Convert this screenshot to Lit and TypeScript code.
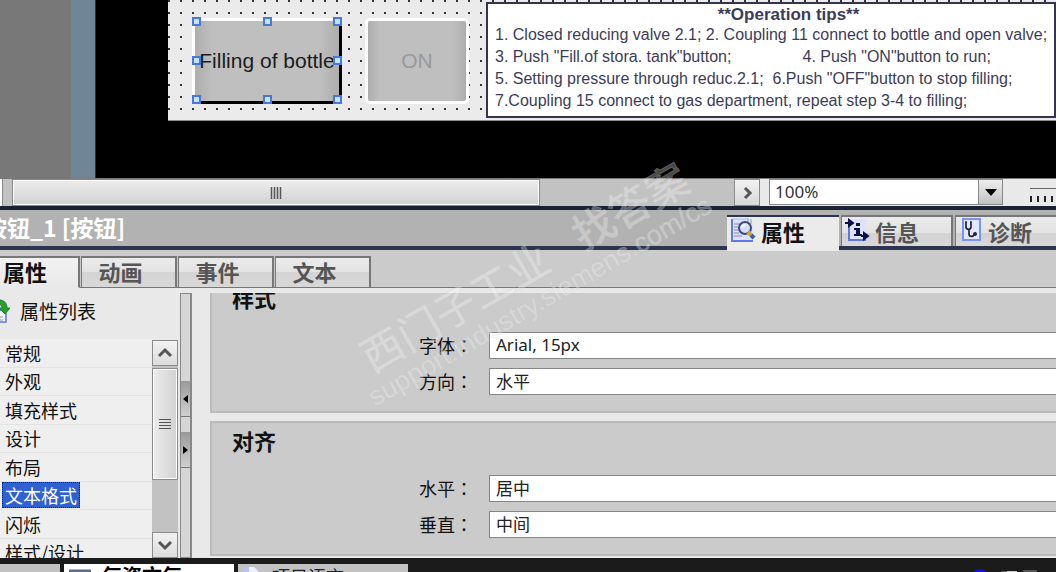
import { LitElement, html, css } from "lit";
import { customElement, state } from "lit/decorators.js";
import { classMap } from "lit/directives/class-map.js";

const categories = ["常规", "外观", "填充样式", "设计", "布局", "文本格式", "闪烁", "样式/设计"];
const subTabs = ["属性", "动画", "事件", "文本"];

const listIcon = html`<svg class="list-icon" width="10" height="24" viewBox="0 0 10 24" aria-hidden="true">
  <rect x="-8" y="11" width="14" height="12" fill="#f4f6ff" stroke="#5b76d8" stroke-width="1.5" />
  <path d="M-1 18h4M-1 21h4" stroke="#8a93b8" />
  <path d="M-4 1C3 0 7 3 7 9h3l-5 6-6-6h3C2 6 0 5-4 5z" fill="#27a02c" stroke="#17701c" stroke-width=".8" />
</svg>`;

const propertiesIcon = html`<svg width="25" height="25" viewBox="0 0 25 25" aria-hidden="true">
  <path d="M1 1h17l4 4v18H1z" fill="#dbe3ff" />
  <path d="M1 1v22h21" fill="none" stroke="#5f78e8" stroke-width="2" />
  <path d="M1 1h16" stroke="#a9b8f4" />
  <path d="M3 6h6M3 9h4M3 12h4M3 15h5M3 18h8" stroke="#8189a0" />
  <path d="M17 0v6M20 1v5" stroke="#9aa0b4" />
  <circle cx="14" cy="10" r="6" fill="#d5ddfa" stroke="#3f4876" stroke-width="2" />
  <path d="M11 10a3 3 0 0 1 4-3" fill="none" stroke="#fff" stroke-width="1.5" />
  <path d="M17 14l3 3" stroke="#d8a23a" stroke-width="4" />
  <path d="M20 17l3 3" stroke="#3d5ea8" stroke-width="4" />
</svg>`;

const infoIcon = html`<svg width="25" height="25" viewBox="0 0 25 25" aria-hidden="true">
  <path d="M4 1h17v21H4z" fill="#dbe3ff" />
  <path d="M4 1v21h17" fill="none" stroke="#5f78e8" stroke-width="2" />
  <path d="M0 5h6M4 2l4 3-4 3z" fill="#0b0f4a" stroke="#0b0f4a" stroke-width="2" />
  <path d="M11 5h4v3h-4zM9 10h6v6h2v2H9v-2h2v-4H9z" fill="#0b0f4a" />
  <path d="M16 18h6M19 15l4 3-4 3z" fill="#0b0f4a" stroke="#0b0f4a" stroke-width="2" />
</svg>`;

const diagnosticsIcon = html`<svg width="19" height="25" viewBox="0 0 19 25" aria-hidden="true">
  <path d="M1 1h16v21H1z" fill="#e0e7ff" />
  <path d="M1 1v21h17V1z" fill="none" stroke="#7d92ee" stroke-width="2" />
  <path d="M5 4H4v5c0 3 5 3 5 0V4H8M7 11v5c0 3 4 3 5 1" fill="none" stroke="#22252e" stroke-width="1.7" />
  <circle cx="13" cy="16" r="2" fill="#22252e" />
</svg>`;

const chevron = (d: string) =>
  html`<svg width="16" height="16" viewBox="0 0 16 16" aria-hidden="true"><path d=${d} fill="none" stroke="#555" stroke-width="3" /></svg>`;

const handlePoints = [
  [0, 0], [50, 0], [100, 0],
  [0, 50], [100, 50],
  [0, 100], [50, 100], [100, 100],
];

@customElement("hmi-canvas")
export class HmiCanvas extends LitElement {
  static styles = css`
    :host {
      display: flex;
      height: 178px;
      background: #000;
      font-family: "Liberation Sans", Arial, sans-serif;
    }
    .dock { flex: none; width: 71px; background: #787878; }
    .edge { flex: none; width: 24px; background: #6f8699; border-right: 1px solid #26323c; }
    .screen {
      flex: 1;
      align-self: flex-start;
      display: flex;
      align-items: flex-start;
      box-sizing: border-box;
      height: 121px;
      margin-left: 72px;
      padding: 2px 0 0 24px;
      background: radial-gradient(circle at 1px 1px, #333 0, #333 1px, transparent 1px) 0 0 / 12px 12px, #ebebeb;
      border-bottom: 1px solid #8d8d8d;
    }
    .key {
      flex: none;
      box-sizing: border-box;
      height: 86px;
      margin: 16px 0 0;
      padding: 0;
      font: 21px "Liberation Sans", Arial, sans-serif;
      white-space: nowrap;
      background: linear-gradient(90deg, #adadad, #bfbfbf 12%, #bfbfbf 86%, #adadad);
    }
    .fill {
      position: relative;
      width: 150px;
      color: #1c1c1c;
      border: 3px solid;
      border-color: #fff #000 #000 #fff;
    }
    .on {
      width: 104px;
      margin-left: 23px;
      color: #999;
      border: 3px solid #fff;
      border-radius: 5px;
    }
    .handles { position: absolute; inset: 1px 1px 1px 2px; }
    .handle {
      position: absolute;
      box-sizing: border-box;
      width: 9px;
      height: 9px;
      margin: -5px;
      background: #bfe4fb;
      border: 2px solid #4878dc;
    }
    .tips {
      flex: 1;
      box-sizing: border-box;
      height: 116px;
      margin-left: 17px;
      padding: 2px 0 0 7px;
      overflow: hidden;
      background: #fff;
      border: 2px solid #34344e;
      color: #3c3c58;
      font-size: 16px;
      line-height: 22px;
      white-space: pre;
    }
    .tips h2 { margin: 0; padding-left: 28px; font-size: 17px; line-height: 18px; text-align: center; }
    .tips p { margin: 0; }
  `;
  render() {
    return html`
      <div class="dock"></div>
      <div class="edge"></div>
      <div class="screen">
        <button class="key fill">Filling of bottle<span class="handles">${handlePoints.map(
          ([x, y]) => html`<span class="handle" style="left:${x}%;top:${y}%"></span>`
        )}</span></button>
        <button class="key on">ON</button>
        <section class="tips"><h2>**Operation tips**</h2><p>1. Closed reducing valve 2.1; 2. Coupling 11 connect to bottle and open valve;</p><p>3. Push "Fill.of stora. tank"button;                4. Push "ON"button to run;</p><p>5. Setting pressure through reduc.2.1;  6.Push "OFF"button to stop filling;</p><p>7.Coupling 15 connect to gas department, repeat step 3-4 to filling;</p></section>
      </div>`;
  }
}

@customElement("zoom-bar")
export class ZoomBar extends LitElement {
  static styles = css`
    :host {
      display: flex;
      box-sizing: border-box;
      height: 28px;
      background: #e9e9e9;
      border-top: 1px solid #777;
    }
    .track { flex: 1; display: flex; background: #c2c2c2; }
    .stub { width: 2px; background: #fff; border-right: 1px solid #888; }
    .thumb {
      box-sizing: border-box;
      width: 528px;
      margin-left: 9px;
      display: flex;
      align-items: center;
      justify-content: center;
      border: 1px solid #888;
      box-shadow: inset 0 0 0 1px #fff;
      background: linear-gradient(#ececec, #d2d2d2);
    }
    .step {
      width: 26px;
      padding: 0;
      display: grid;
      place-items: center;
      border: 1px solid #8b8b8b;
      background: linear-gradient(#f2f2f2, #d8d8d8);
    }
    .combo { display: grid; width: 234px; margin: 0 0 2px 9px; }
    .combo select {
      grid-area: 1 / 1;
      appearance: none;
      padding: 0 5px 1px;
      border: 1px solid #888;
      border-radius: 0;
      background: #fff;
      color: #333;
      font: 17px "Noto Sans", sans-serif;
    }
    .arrow {
      grid-area: 1 / 1;
      justify-self: end;
      box-sizing: border-box;
      width: 25px;
      display: grid;
      place-items: center;
      border: 1px solid #888;
      background: linear-gradient(#eee, #c2c2c2);
      pointer-events: none;
    }
    .scale { display: flex; flex-direction: column; gap: 7px; width: 26px; margin: 9px 0 0 27px; overflow: hidden; }
    .scale input { appearance: none; flex: none; width: 140px; height: 1px; margin: 0; background: #666; }
    .scale input::-webkit-slider-thumb { appearance: none; width: 1px; height: 1px; }
    .ticks { height: 6px; background: repeating-linear-gradient(90deg, #222 0 2px, transparent 2px 7px); }
  `;
  render() {
    return html`
      <div class="track">
        <div class="stub"></div>
        <div class="thumb"><svg width="12" height="12" viewBox="0 0 12 12" aria-hidden="true"><path d="M1.500 0v12M4.500 0v12M7.500 0v12M10.500 0v12" stroke="#555" stroke-width="1.5" /></svg></div>
      </div>
      <button class="step" aria-label="Scroll right">${chevron("M6 3l5 5-5 5")}</button>
      <div class="combo">
        <select aria-label="Zoom"><option>100%</option></select>
        <span class="arrow"><svg width="12" height="7" viewBox="0 0 12 7" aria-hidden="true"><path d="M0 0h12L6 7z" /></svg></span>
      </div>
      <div class="scale"><input type="range" aria-label="Zoom factor" /><div class="ticks"></div></div>`;
  }
}

@customElement("inspector-header")
export class InspectorHeader extends LitElement {
  static styles = css`
    :host {
      display: flex;
      align-items: flex-start;
      justify-content: space-between;
      box-sizing: border-box;
      height: 45px;
      border-top: 4px solid #1b2234;
      background: linear-gradient(#b2b2b2, #b2b2b2 36px, #2c3450 36px, #2c3450 40px, #cbcbcb 40px);
      overflow: hidden;
    }
    h1 {
      margin: 0 0 0 -16px;
      color: #fff;
      font: bold 23px/34px "Noto Sans CJK SC", sans-serif;
      white-space: nowrap;
    }
    .tabs { display: flex; gap: 2px; margin-top: 5px; }
    .tab {
      display: flex;
      align-items: center;
      gap: 5px;
      box-sizing: border-box;
      width: 112px;
      height: 31px;
      padding: 0 0 2px 3px;
      border: 1px solid #777;
      border-width: 2px 2px 0 1px;
      background: linear-gradient(#ebebeb, #e2e2e2 55%, #d2d2d2 55%, #d8d8d8);
      color: #555;
      font: bold 22px/26px "Noto Sans CJK SC", sans-serif;
      white-space: nowrap;
    }
    .active { height: 36px; padding: 0 0 7px 4px; color: #111; border-top-color: #2c3450; background: #ebebeb; border-width: 2px 0 0 0; }
    .last { width: 101px; padding-left: 6px; border-right: 0; gap: 7px; }
  `;
  render() {
    return html`<h1>按钮_1 [按钮]</h1>
      <div class="tabs">
        <button class="tab active">${propertiesIcon}属性</button>
        <button class="tab">${infoIcon}信息</button>
        <button class="tab last">${diagnosticsIcon}诊断</button>
      </div>`;
  }
}

@customElement("category-list")
export class CategoryList extends LitElement {
  @state() private current = "文本格式";
  static styles = css`
    :host {
      display: flex;
      flex-direction: column;
      width: 178px;
      background: #e9e9e9;
      font-family: "Noto Sans CJK SC", sans-serif;
      color: #111;
    }
    .head { display: flex; align-items: center; gap: 10px; height: 36px; font-size: 19px; line-height: 24px; }
    .list-icon { flex: none; }
    .body { flex: 1; display: flex; min-height: 0; margin-top: 10px; overflow: hidden; }
    ul {
      flex: 1;
      display: grid;
      grid-auto-rows: 1fr;
      height: 228px;
      margin: 0;
      padding: 0;
      list-style: none;
      background: #efefef;
    }
    li { display: flex; align-items: center; border-bottom: 1px solid #e4e4e4; padding-left: 2px; }
    li button {
      padding: 0 2px;
      border: 1px dotted transparent;
      background: none;
      color: inherit;
      font: 18px/24px "Noto Sans CJK SC", sans-serif;
      white-space: nowrap;
    }
    li button.selected { background: #2f62d0; color: #fff; border-color: #123; }
    .scroll { display: flex; flex-direction: column; width: 26px; margin-top: 1px; background: #c2c2c2; }
    .scroll button {
      flex: none;
      height: 26px;
      padding: 0;
      display: grid;
      place-items: center;
      border: 1px solid #8b8b8b;
      background: linear-gradient(#f2f2f2, #dcdcdc);
    }
    .thumb {
      flex: none;
      box-sizing: border-box;
      height: 112px;
      margin: 2px 0 auto;
      display: grid;
      place-items: center;
      border: 1px solid #8b8b8b;
      box-shadow: inset 0 0 0 1px #fff;
      background: linear-gradient(90deg, #ececec, #d2d2d2);
    }
  `;
  render() {
    return html`
      <div class="head">${listIcon}<span>属性列表</span></div>
      <div class="body">
        <ul>
          ${categories.map(
            (c) => html`<li><button class=${classMap({ selected: c === this.current })} @click=${() => (this.current = c)}>${c}</button></li>`
          )}
        </ul>
        <div class="scroll">
          <button aria-label="Scroll up">${chevron("M2 11l6-6 6 6")}</button>
          <div class="thumb"><svg width="12" height="12" viewBox="0 0 12 12" aria-hidden="true"><path d="M0 1.500h12M0 4.500h12M0 7.500h12M0 10.500h12" stroke="#555" /></svg></div>
          <button aria-label="Scroll down">${chevron("M2 5l6 6 6-6")}</button>
        </div>
      </div>`;
  }
}

@customElement("property-group")
export class PropertyGroup extends LitElement {
  static properties = { heading: {}, rows: { attribute: false } };
  declare heading: string;
  declare rows: string[][];
  static styles = css`
    :host {
      display: block;
      box-sizing: border-box;
      height: 135px;
      background: #cbcbcb;
      border: 2px solid #bababa;
      border-right: 0;
      color: #111;
      font-family: "Noto Sans CJK SC", sans-serif;
    }
    h3 { margin: 0 0 20px; padding: 2px 0 0 20px; font-size: 22px; line-height: 30px; }
    .row { display: grid; grid-template-columns: 70px 1fr; margin: 0 0 9px 207px; }
    label { font-size: 18px; line-height: 26px; white-space: nowrap; }
    .colon { font-family: "Noto Sans CJK JP", sans-serif; }
    input {
      box-sizing: border-box;
      min-width: 0;
      width: 100%;
      height: 27px;
      padding: 0 6px 2px;
      border: 1px solid #858585;
      border-right: 0;
      border-radius: 0;
      background: #fff;
      color: #222;
      font: 17px "Noto Sans", "Noto Sans CJK SC", sans-serif;
    }
  `;
  render() {
    return html`<h3>${this.heading}</h3>
      ${this.rows.map(
        ([label, value], i) => html`<div class="row"><label for="f${i}">${label}<span class="colon" lang="ja">：</span></label><input id="f${i}" .value=${value} /></div>`
      )}`;
  }
}

@customElement("task-bar")
export class TaskBar extends LitElement {
  static styles = css`
    :host {
      display: flex;
      gap: 4px;
      flex: none;
      box-sizing: border-box;
      height: 14px;
      padding-top: 6px;
      overflow: hidden;
      background: #1b1b1b;
    }
    button {
      display: flex;
      align-items: flex-start;
      gap: 10px;
      box-sizing: border-box;
      width: 170px;
      height: 30px;
      padding: 0 4px;
      border: 0;
      background: #c2c2c2;
      color: #222;
      font: 18px/24px "Noto Sans CJK SC", sans-serif;
      white-space: nowrap;
    }
    .first { width: 60px; }
    .open { background: #fff; font-weight: bold; font-size: 20px; color: #000; }
    .tray { margin-left: auto; width: 84px; }
  `;
  render() {
    return html`
      <button class="first" aria-label="Portal view"></button>
      <button class="open"><svg width="24" height="24" viewBox="0 0 24 24" aria-hidden="true"><path d="M1 7h22v15H1z" fill="#dfe5f4" /><path d="M1 7h22" stroke="#5d6b8e" stroke-width="3" /></svg>每资文每</button>
      <button><svg width="20" height="24" viewBox="0 0 20 24" aria-hidden="true"><path d="M1 3h11l6 6v14H1z" fill="#eef1ff" /><path d="M1 3h6v20H1z" fill="#b9c3f5" /></svg>项目语言</button>
      <svg class="tray" height="20" viewBox="0 0 84 20" aria-hidden="true"><circle cx="8" cy="14" r="9" fill="#1111e8" /><path d="M35 7h10v10H35z" fill="#ccc" /><path d="M29 8h6M51 7h14" stroke="#555" stroke-width="2" /></svg>`;
  }
}

@customElement("app-root")
export class AppRoot extends LitElement {
  @state() private tab = "属性";
  static styles = css`
    :host {
      position: relative;
      display: flex;
      flex-direction: column;
      height: 100vh;
      overflow: hidden;
      background: #e9e9e9;
    }
    hmi-canvas, zoom-bar, inspector-header { flex: none; }
    .subtabs {
      flex: none;
      display: flex;
      gap: 1px;
      box-sizing: border-box;
      height: 42px;
      padding-top: 5px;
      background: linear-gradient(#cbcbcb 36px, #777 36px, #777 37px, #e9e9e9 37px);
    }
    .subtab {
      box-sizing: border-box;
      width: 96px;
      height: 32px;
      padding: 0 16px 5px 0;
      border: 1px solid #777;
      border-width: 2px 2px 1px 1px;
      background: linear-gradient(#ebebeb, #e2e2e2 50%, #d4d4d4 50%, #d8d8d8);
      color: #555;
      font: bold 22px/26px "Noto Sans CJK SC", sans-serif;
    }
    .subtab.active { width: 80px; padding-right: 28px; color: #111; background: linear-gradient(#f2f2f2, #e9e9e9); border-bottom-color: #e9e9e9; border-left: 0; }
    .main { flex: 1; display: flex; min-height: 0; }
    category-list { flex: none; }
    .splitter {
      flex: none;
      display: flex;
      flex-direction: column;
      gap: 15px;
      box-sizing: border-box;
      width: 12px;
      margin-left: 2px;
      padding-top: 87px;
      background: #d6d6d6;
      border: 1px solid #888;
      border-right-width: 2px;
    }
    .splitter button {
      height: 36px;
      padding: 0;
      display: grid;
      place-items: center;
      border: 0;
      border-bottom: 1px solid #777;
      background: linear-gradient(#999, #d0d0d0);
    }
    .groups { flex: 1; display: flex; flex-direction: column; gap: 8px; min-width: 0; margin-left: 18px; overflow: hidden; }
    property-group { flex: none; }
    .scrolled { margin-top: -15px; }
    .watermark {
      position: absolute;
      left: 370px;
      top: 382px;
      transform: rotate(-30deg);
      transform-origin: 0 50%;
      color: rgba(255, 255, 255, 0.3);
      -webkit-text-stroke: 1px rgba(200, 200, 200, 0.3);
      pointer-events: none;
      white-space: nowrap;
    }
    .brand { display: flex; gap: 34px; margin: -46px 0 0 14px; font: 500 42px/48px "Noto Sans CJK SC", sans-serif; }
    .site { font: 27px/30px "Liberation Sans", Arial, sans-serif; }
  `;
  render() {
    return html`
      <hmi-canvas></hmi-canvas>
      <zoom-bar></zoom-bar>
      <inspector-header></inspector-header>
      <nav class="subtabs">
        ${subTabs.map(
          (t) => html`<button class=${classMap({ subtab: true, active: t === this.tab })} @click=${() => (this.tab = t)}>${t}</button>`
        )}
      </nav>
      <div class="main">
        <category-list></category-list>
        <div class="splitter">
          <button aria-label="Collapse left"><svg width="5" height="8" viewBox="0 0 5 8"><path d="M5 0v8L0 4z" /></svg></button>
          <button aria-label="Expand right"><svg width="5" height="8" viewBox="0 0 5 8"><path d="M0 0v8l5-4z" /></svg></button>
        </div>
        <div class="groups">
          <property-group class="scrolled" heading="样式" .rows=${[["字体", "Arial, 15px"], ["方向", "水平"]]}></property-group>
          <property-group heading="对齐" .rows=${[["水平", "居中"], ["垂直", "中间"]]}></property-group>
        </div>
      </div>
      <task-bar></task-bar>
      <div class="watermark" aria-hidden="true">
        <div class="brand"><span>西门子工业</span><span>找答案</span></div>
        <div class="site">support.industry.siemens.com/cs</div>
      </div>`;
  }
}
